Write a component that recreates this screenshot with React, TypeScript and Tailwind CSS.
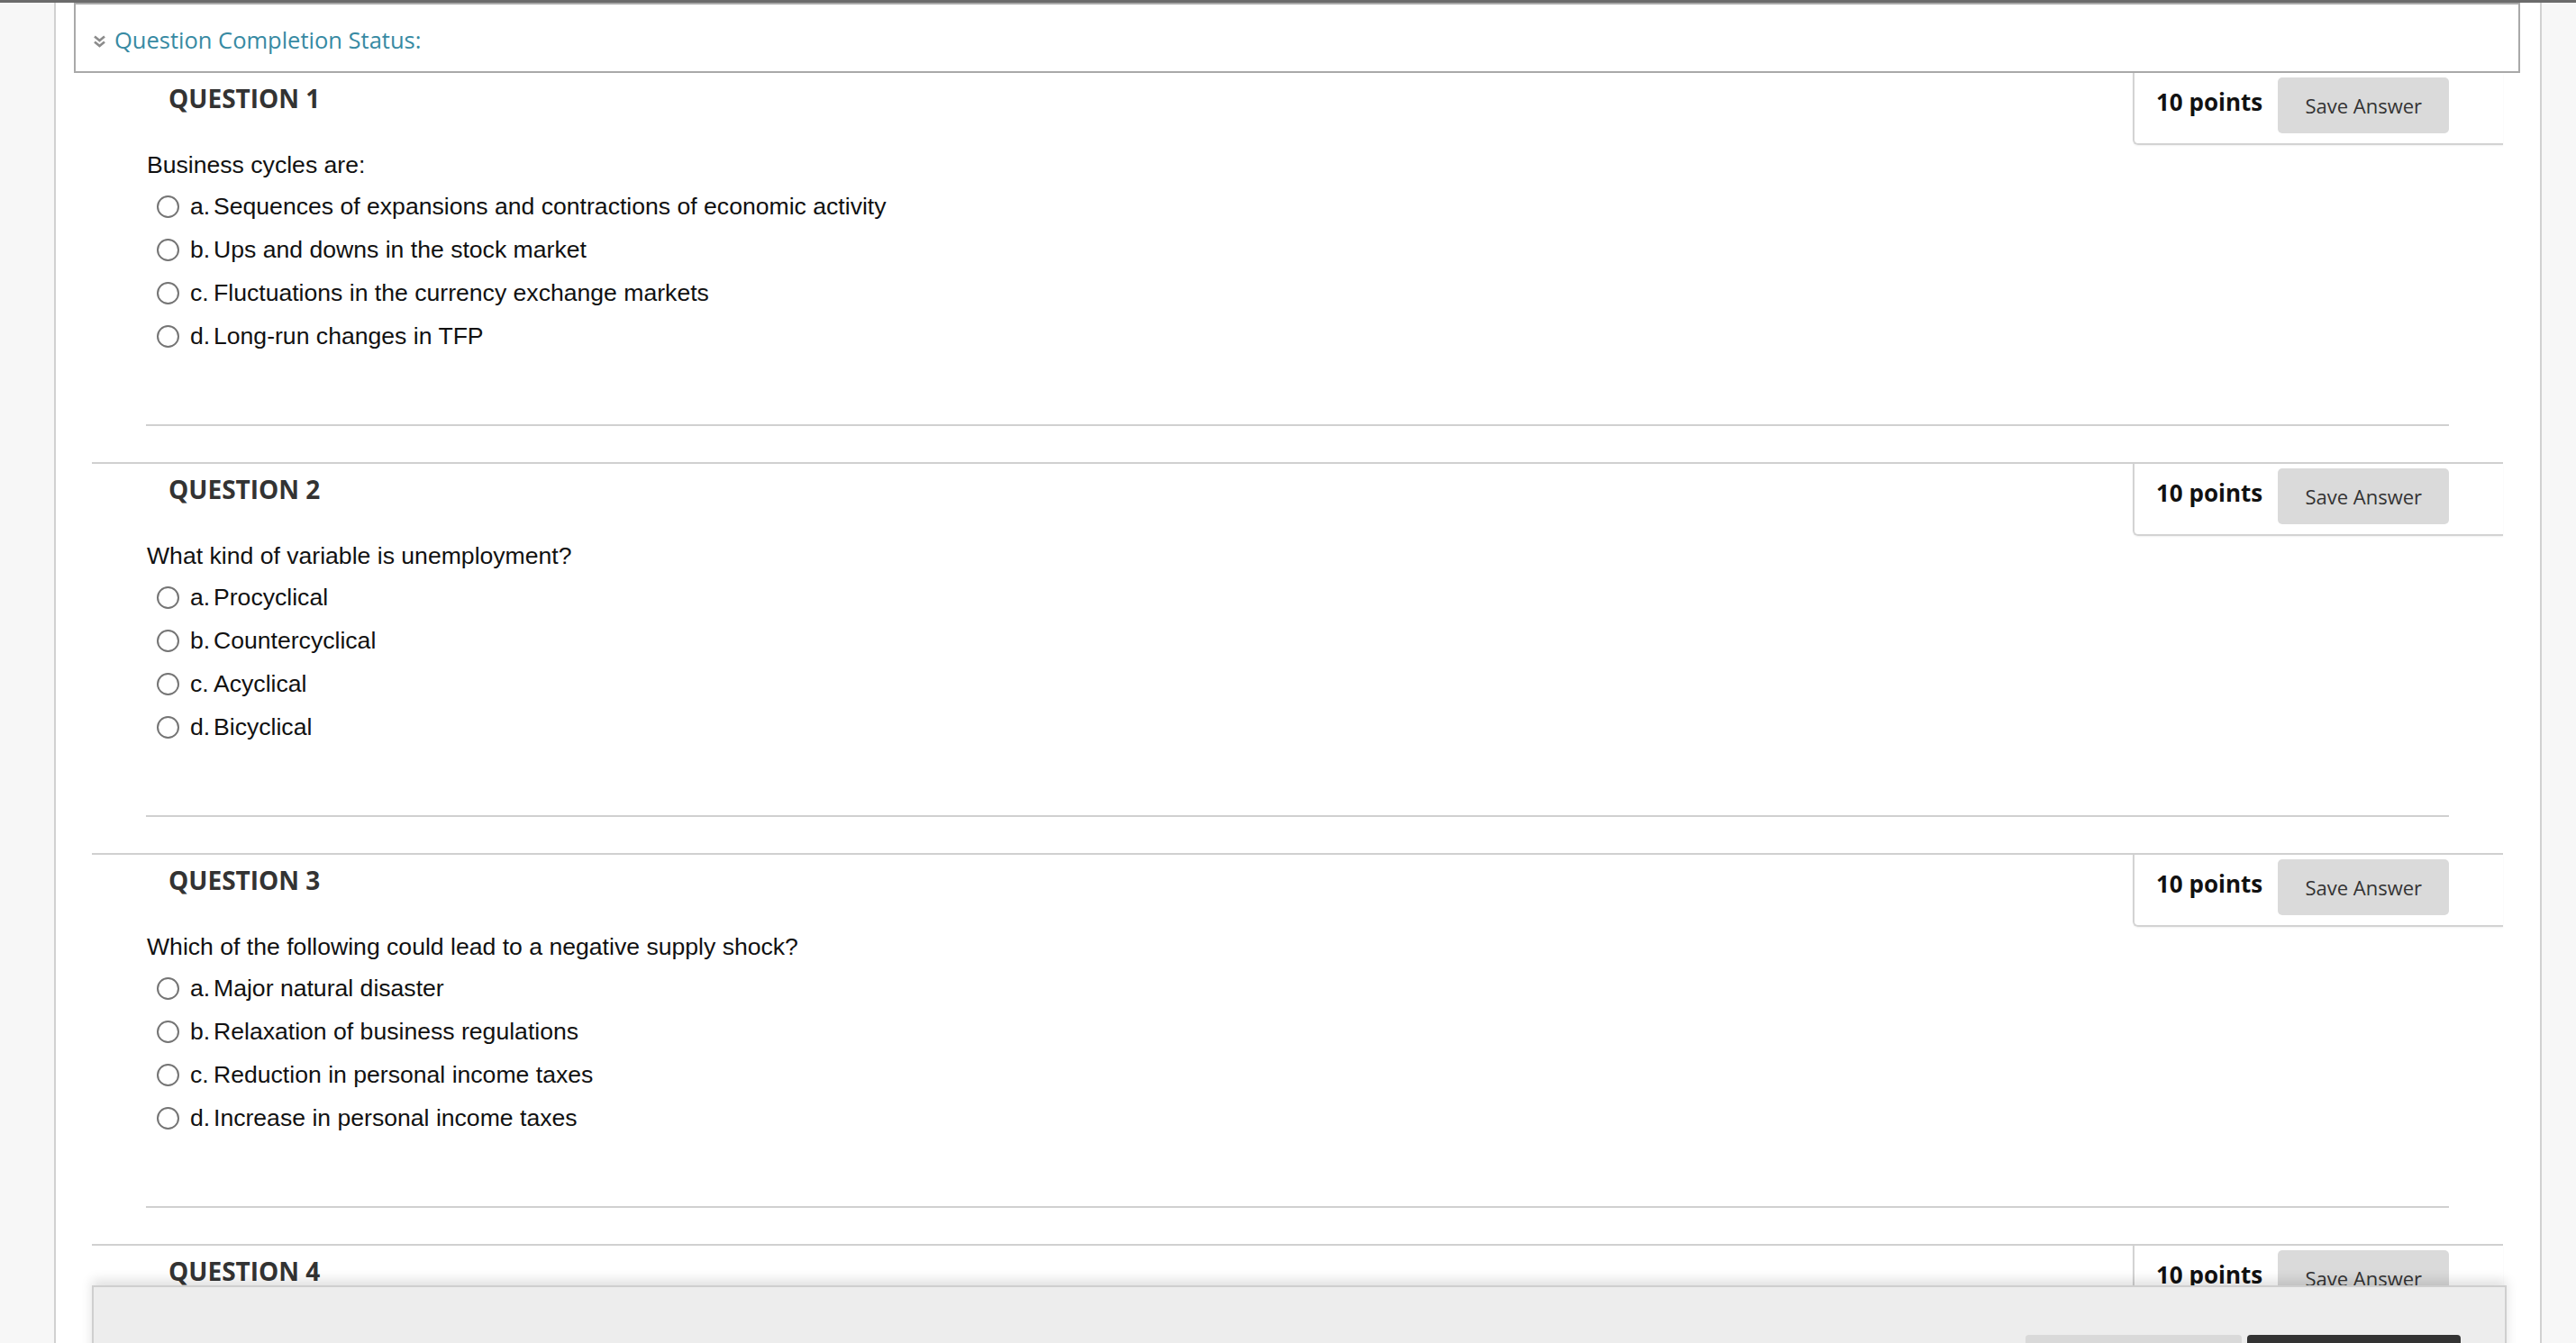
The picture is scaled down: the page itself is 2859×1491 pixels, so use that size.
const questions = [
  {
    title: "QUESTION 1",
    text: "Business cycles are:",
    options: [
      "Sequences of expansions and contractions of economic activity",
      "Ups and downs in the stock market",
      "Fluctuations in the currency exchange markets",
      "Long-run changes in TFP",
    ],
  },
  {
    title: "QUESTION 2",
    text: "What kind of variable is unemployment?",
    options: ["Procyclical", "Countercyclical", "Acyclical", "Bicyclical"],
  },
  {
    title: "QUESTION 3",
    text: "Which of the following could lead to a negative supply shock?",
    options: [
      "Major natural disaster",
      "Relaxation of business regulations",
      "Reduction in personal income taxes",
      "Increase in personal income taxes",
    ],
  },
  {
    title: "QUESTION 4",
    text: "",
    options: [],
  },
];

const letters = ["a.", "b.", "c.", "d."];

function Chevrons() {
  return (
    <svg width="15" height="15" viewBox="0 0 15 15" fill="none" aria-hidden>
      <path d="M2 2.5 L7.5 7 L13 2.5" stroke="#8c8c8c" strokeWidth="2.6" />
      <path d="M2 8.5 L7.5 13 L13 8.5" stroke="#8c8c8c" strokeWidth="2.6" />
    </svg>
  );
}

function Question({ q, first }: { q: (typeof questions)[number]; first: boolean }) {
  return (
    <div
      className={
        "ml-[40px] mr-[41px] border-t-2 border-[#d0d0d0] pb-[40px] " + (first ? "-mt-[2px]" : "")
      }
    >
      <div className="flex h-[80px] items-start justify-between">
        <h2 className="pl-[85px] pt-[14px] font-['Open_Sans',sans-serif] text-[28px] font-bold leading-none text-[#333]">
          {q.title}
        </h2>
        <div className="flex h-[80px] w-[411px] items-start rounded-bl-[6px] border-b-2 border-l-2 border-[#d3d3d3] pl-[24px] shadow-[0_1px_2px_rgba(0,0,0,0.06)]">
          <span className="mt-[19px] font-['Open_Sans',sans-serif] text-[26px] font-bold leading-none text-[#111]">
            10 points
          </span>
          <button className="ml-[17px] mt-[5px] flex h-[62px] w-[190px] items-center justify-center rounded-[5px] bg-[#dadada] font-['Open_Sans',sans-serif] text-[22px] text-[#333]">
            Save Answer
          </button>
        </div>
      </div>

      <div className="pl-[61px] font-['Liberation_Sans',Arial,sans-serif] text-[26.6px] leading-none text-[#111]">
        <p className="mt-[8.5px] h-[26.5px]">{q.text}</p>
        <div className="mt-[9px]">
          {q.options.map((opt, i) => (
            <div key={opt} className="flex h-[48px] items-center">
              <span className="ml-[11px] h-[25px] w-[25px] rounded-full border-2 border-[#747474] bg-white" />
              <span className="ml-[12px] w-[26px]">{letters[i]}</span>
              <span>{opt}</span>
            </div>
          ))}
        </div>
      </div>

      <div className="mx-[60px] mt-[74px] h-[2px] bg-[#d0d0d0]" />
    </div>
  );
}

export default function App() {
  return (
    <div className="relative h-[1491px] w-full overflow-hidden bg-white">
      <div className="h-[3px] bg-[#6b6b6b]" />
      <div className="flex h-[1488px]">
        <div className="w-[62px] shrink-0 border-r-2 border-[#d1d1d1] bg-[#f7f7f7]" />

        <main className="min-w-0 flex-1">
          <div className="relative z-10 ml-[20px] mr-[22px] flex h-[78px] items-center gap-[9px] border-2 border-[#a9a9a9] bg-white pl-[19px] pt-[6px]">
            <Chevrons />
            <span className="font-['Open_Sans',sans-serif] text-[25.5px] leading-none text-[#378aa3]">
              Question Completion Status:
            </span>
          </div>

          {questions.map((q, i) => (
            <Question key={q.title} q={q} first={i === 0} />
          ))}
        </main>

        <div className="w-[40px] shrink-0 border-l-2 border-[#d1d1d1] bg-[#f7f7f7]" />
      </div>

      <div className="absolute left-[102px] top-[1427px] h-[120px] w-[2680px] border-2 border-[#cfcfcf] bg-[#ededed] shadow-[0_-6px_12px_rgba(0,0,0,0.12)]">
        <div className="absolute left-[2144px] top-[53px] flex gap-[6px]">
          <div className="h-[40px] w-[240px] rounded-t-[4px] bg-[#d9d9d9]" />
          <div className="h-[40px] w-[237px] rounded-t-[4px] bg-[#333]" />
        </div>
      </div>
    </div>
  );
}
